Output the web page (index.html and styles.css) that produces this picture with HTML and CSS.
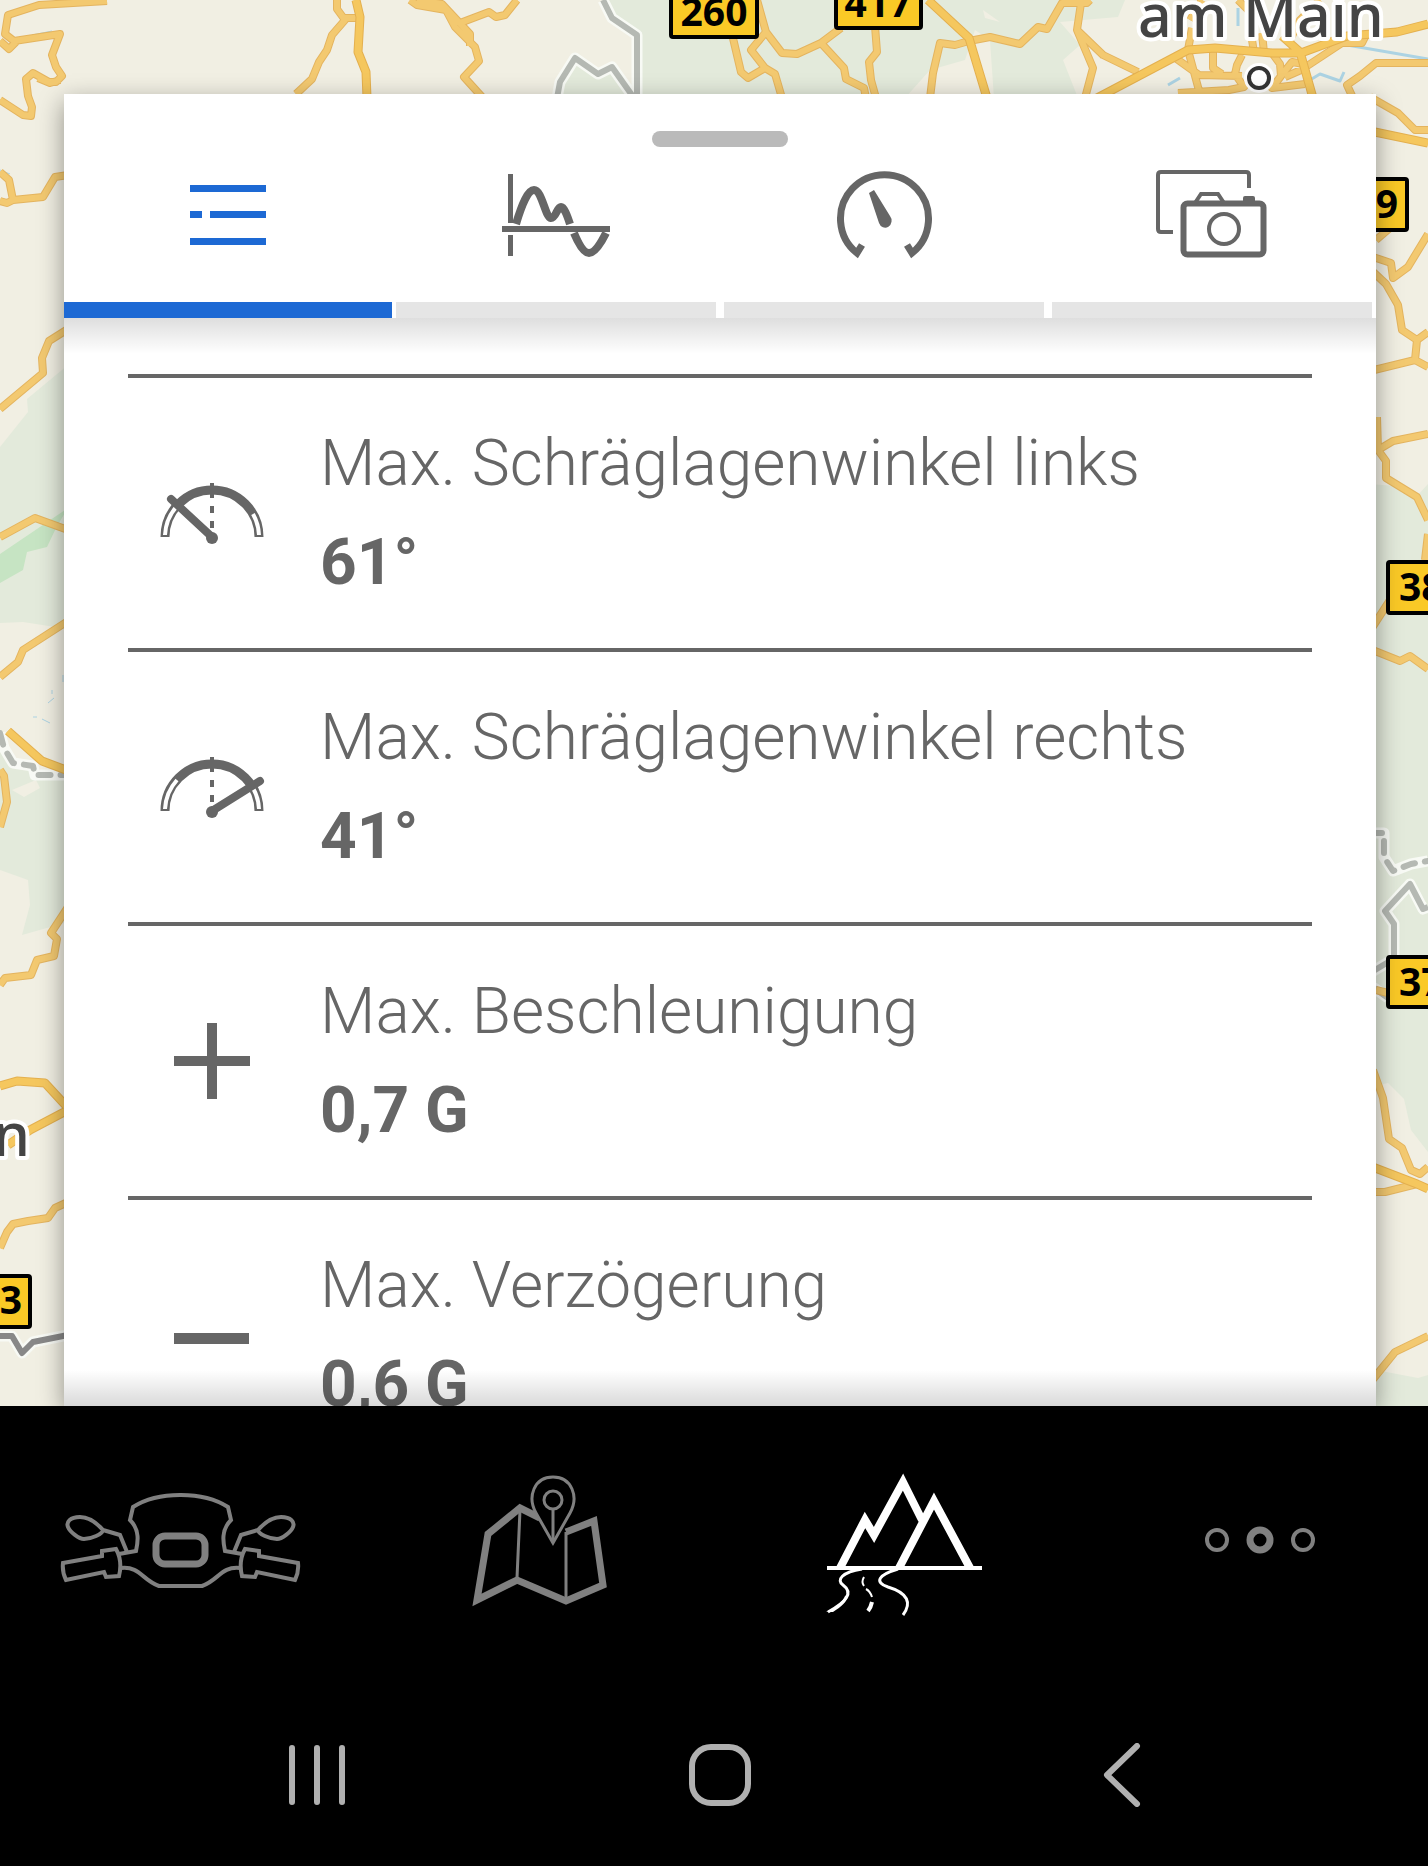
FILE: index.html
```html
<!DOCTYPE html>
<html lang="de">
<head>
  <meta charset="UTF-8" />
  <meta name="viewport" content="width=device-width, initial-scale=1.0"/>
  <title>Fahrt</title>
  <link rel="stylesheet" href="styles.css">
</head>
<body>

<main class="stage">

  <!-- Karte im Hintergrund -->
  <svg class="map" viewBox="0 0 1428 1406" preserveAspectRatio="xMinYMin slice" role="img" aria-label="Karte">
    <defs>
      <g id="roads">
        <path d="M107 1L39 5L8 15L5 34L14 41L60 34L52 55L56 67L62 76L56 82H49L33 73L26 79L28 96L32 107L31 116L23 115L0 100M0 41L9 49L16 42M38 78L50 83L60 80"/>
        <path d="M337 0V9L345 20L332 35L327 50L319 62L312 79L296 94M345 18H360"/>
        <path d="M410 0L417 5L446 10L455 27L475 47L479 61L464 77L483 98M417 0L442 4L470 34V46M460 23L489 12L496 17L505 15L517 0"/>
        <path d="M757 0L766 32L782 53L797 54L821 43L841 28M766 32L751 50L765 68L748 78L741 72L732 34M765 68L775 74L782 98M821 43L844 68L846 79L864 88L866 98M875 26L877 52L869 62L871 80L876 98"/>
        <path d="M930 98L933 73L940 43L955 45L969 41L990 37L1020 44L1038 27L1047 29L1062 3H1087L1090 0M1081 3L1077 30L1093 68L1085 98M1077 30L1103 55L1138 72"/>
        <path d="M1192 28L1188 50L1201 98M1174 57L1199 75L1242 76M1213 50V68L1222 74M1251 33L1254 53M1262 33L1264 53M1242 55L1237 65L1235 74L1244 87L1229 90L1178 93M1272 53L1280 64L1281 76L1272 88L1305 84M1281 76L1292 62L1304 64M1285 77L1301 70L1342 43H1362L1367 33M1428 63H1376L1360 76L1347 85L1353 98"/>
        <path d="M1190 20L1202 0M1238 0L1260 22M1290 40L1300 20L1320 0"/>
        <path d="M0 172L9 180L13 200L7 203L0 201M13 200L43 197L55 177L68 175M68 329L49 341L42 358L43 373L0 409M0 537L35 518L68 530M68 621L23 650L18 662L0 677M0 770L4 776L7 802L0 827"/>
        <path d="M68 907L51 933L57 939L54 956L37 960L31 975L5 978L0 985M68 1202L55 1208L48 1218L28 1221L13 1224L7 1232L0 1248"/>
        <path d="M1370 97L1398 113L1415 130H1428M1370 256L1391 263L1393 278L1408 267L1428 234M1370 269L1386 284L1398 305L1402 330L1417 340L1428 332M1417 340L1415 360L1370 371M1415 360L1428 367M1376 240L1390 228"/>
        <path d="M1377 417L1378 450L1386 461V478L1417 497L1428 520M1378 450L1393 441L1428 434M1428 534L1425 560M1370 631L1390 600M1370 649L1400 661L1410 656L1428 669M1376 990L1392 994"/>
        <path d="M1373 1070L1383 1098L1389 1139L1402 1148L1411 1170L1420 1174L1428 1167M1370 1192H1385L1417 1184M1370 1383L1395 1352L1428 1336"/>
      </g>
      <g id="main-roads">
        <path d="M356 0L360 17L358 52L366 72L367 98"/>
        <path d="M928 0L969 38L987 98"/>
        <path d="M1097 98L1188 50L1215 48L1272 53L1301 53L1347 36L1397 32L1428 24M1282 36L1300 52L1313 98"/>
        <path d="M8 731L42 761L66 770M0 1086L17 1081L45 1083L68 1108M68 1110L30 1130L8 1145"/>
        <path d="M1370 131L1428 143M1370 1166L1417 1184L1428 1189"/>
      </g>
    </defs>

    <!-- Waldflächen -->
    <g class="forest">
      <path d="M603 0L612 18L637 35V98H905L930 70L965 60L975 30L990 40L994 98H1078L1063 60L1080 45L1060 22L1118 17L1125 0Z"/>
      <path d="M557 98L560 82L575 58L598 74L612 67L634 98Z"/>
      <path d="M68 365L27 399L28 412L0 447V623L23 622L68 629Z"/>
      <path d="M0 735L15 765L68 775V922L22 935L30 905L28 880L0 870Z"/>
      <path d="M1370 484L1395 486L1418 495L1428 484V1406H1370Z"/>
    </g>
    <path class="park" d="M68 508L0 554V583L23 570L27 552L47 547L57 526Z"/>
    <g class="field">
      <path d="M1370 1087L1388 1083L1404 1099L1411 1130L1428 1152V1375L1418 1378L1381 1371L1370 1375Z"/>
      <path d="M983 10L1000 22L985 18ZM12 790L36 780L40 788L24 797Z"/>
    </g>
    <g class="water">
      <path d="M1347 45L1428 59M1168 85L1180 78M1310 80L1320 74L1340 81L1344 72M1238 8V26"/>
      <path class="stream" d="M33 717H37M42 719L50 723M48 703L54 698M52 690V694M63 675V682M27 12L40 6M32 35L52 31M0 170L10 174"/>
    </g>

    <!-- Grenzen -->
    <g class="border-halo">
      <path d="M603 0L612 18L637 35V98M557 98L560 82L575 58L598 74L612 67L634 98"/>
      <path d="M0 733L4 748L13 763L33 766L35 775H68M1370 833H1384V857L1393 871L1411 864L1428 861"/>
      <path d="M1428 907L1423 909L1410 884L1385 911L1394 924V957M1370 973L1390 961M1370 985L1388 998"/>
      <path d="M0 1336H12L22 1353L33 1342L68 1335"/>
    </g>
    <g class="border-line">
      <path d="M603 0L612 18L637 35V98M557 98L560 82L575 58L598 74L612 67L634 98"/>
      <path d="M1428 907L1423 909L1410 884L1385 911L1394 924V957M1370 973L1390 961M1370 985L1388 998"/>
      <path class="dashed" d="M0 733L4 748L13 763L33 766L35 775H68M1370 833H1384V857L1393 871L1411 864L1428 861"/>
      <path class="state" d="M0 1336H12L22 1353L33 1342L68 1335"/>
    </g>

    <use class="road-casing" href="#roads"/>
    <use class="road" href="#roads"/>
    <use class="main-casing" href="#main-roads"/>
    <use class="main-road" href="#main-roads"/>

    <!-- Straßenschilder -->
    <g class="sign">
      <rect x="671" y="-15" width="86" height="52" rx="2"/>
      <rect x="836" y="-24" width="85" height="52" rx="2"/>
      <rect x="1340" y="179" width="67" height="51" rx="2"/>
      <rect x="1388" y="562" width="86" height="51" rx="2"/>
      <rect x="1388" y="957" width="86" height="50" rx="2"/>
      <rect x="-40" y="1276" width="70" height="51" rx="2"/>
    </g>
    <g class="sign-text">
      <text x="714" y="26" text-anchor="middle">260</text>
      <text x="878" y="17" text-anchor="middle">417</text>
      <text x="1398" y="218" text-anchor="end">9</text>
      <text x="1399" y="601">38</text>
      <text x="1399" y="996">37</text>
      <text x="22" y="1314" text-anchor="end">3</text>
    </g>

    <g class="place">
      <text x="1138" y="37">am Main</text>
      <text x="30" y="1156" text-anchor="end">n</text>
    </g>
    <circle class="city-halo" cx="1259" cy="78" r="15"/>
    <circle class="city" cx="1259" cy="78" r="10"/>
  </svg>

  <section class="panel">
    <header class="panel-head">
      <div class="handle"></div>
      <div class="tabs" role="tablist">
        <button class="tab active" role="tab" aria-selected="true" aria-label="Liste">
          <svg width="76" height="60" viewBox="0 0 76 60" fill="currentColor">
            <path d="M0 0H76V7H0ZM0 26H12V33H0ZM20 26H76V33H20ZM0 53H76V60H0Z"/>
          </svg>
        </button>
        <button class="tab" role="tab" aria-selected="false" aria-label="Diagramm">
          <svg width="108" height="84" viewBox="0 0 108 84" fill="none" stroke="currentColor">
            <path stroke-width="5" d="M8.5 1V50M8.5 62V83"/>
            <path stroke-width="6" d="M0 56H108"/>
            <path stroke-width="8" d="M14 51C20 31 26 17 32 17C40 17 43 44 49 45C54 45 55 34 59 34C62 34 65 42 68 51M72 60C77 72 82 80 87 80C92 80 98 72 104 60"/>
          </svg>
        </button>
        <button class="tab" role="tab" aria-selected="false" aria-label="Tacho">
          <svg width="97" height="90" viewBox="0 0 97 90" fill="none" stroke="currentColor">
            <path stroke-width="7" d="M26 75L21 83A44 44 0 1 1 76 83L71 75"/>
            <path fill="currentColor" stroke="none" d="M33 23L38 20L54 46A6.5 7 0 1 1 43 53Z"/>
          </svg>
        </button>
        <button class="tab" role="tab" aria-selected="false" aria-label="Bilder">
          <svg width="114" height="92" viewBox="0 0 114 92" fill="none" stroke="currentColor">
            <path stroke-width="4" d="M94 19V6Q94 3 91 3H6Q3 3 3 6V60Q3 63 6 63H18"/>
            <rect stroke-width="6" x="28.5" y="34.5" width="80" height="51" rx="4"/>
            <circle stroke-width="4" cx="69" cy="60" r="15"/>
            <path stroke-width="4" d="M40 34L46 25H63L69 34"/>
            <path fill="currentColor" stroke="none" d="M88 33V29Q88 27 90 27H98Q100 27 100 29V33Z"/>
          </svg>
        </button>
      </div>
    </header>

    <div class="panel-body">
      <ul class="stats">
        <li class="stat">
          <svg class="stat-icon" width="108" height="66" viewBox="0 0 108 66" fill="none" stroke="currentColor">
            <path stroke-width="9" d="M7 57A47 47 0 0 1 101 57"/>
            <path stroke="#fff" stroke-width="4" d="M7 55A47 47 0 0 1 21 24M101 55A47 47 0 0 0 95 34"/>
            <path stroke-width="4" d="M54 3V18M54 26V33M54 41V48"/>
            <path stroke-width="8" stroke-linecap="round" d="M54 57L13 19"/>
            <circle cx="54" cy="58" r="6" fill="currentColor" stroke="none"/>
          </svg>
          <div>
            <p class="label">Max. Schräglagenwinkel links</p>
            <p class="value">61°</p>
          </div>
        </li>
        <li class="stat">
          <svg class="stat-icon" width="108" height="66" viewBox="0 0 108 66" fill="none" stroke="currentColor">
            <path stroke-width="9" d="M7 57A47 47 0 0 1 101 57"/>
            <path stroke="#fff" stroke-width="4" d="M7 55A47 47 0 0 1 19 26M101 55A47 47 0 0 0 95 34"/>
            <path stroke-width="4" d="M54 3V18M54 26V33M54 41V48"/>
            <path stroke-width="8" stroke-linecap="round" d="M54 57L102 27"/>
            <circle cx="54" cy="58" r="6" fill="currentColor" stroke="none"/>
          </svg>
          <div>
            <p class="label">Max. Schräglagenwinkel rechts</p>
            <p class="value">41°</p>
          </div>
        </li>
        <li class="stat">
          <svg class="stat-icon" width="76" height="76" viewBox="0 0 76 76" fill="currentColor">
            <path d="M33 0H43V33H76V43H43V76H33V43H0V33H33Z"/>
          </svg>
          <div>
            <p class="label">Max. Beschleunigung</p>
            <p class="value">0,7 G</p>
          </div>
        </li>
        <li class="stat">
          <svg class="stat-icon" width="76" height="76" viewBox="0 0 76 76" fill="currentColor">
            <path d="M0 36H75V47H0Z"/>
          </svg>
          <div>
            <p class="label">Max. Verzögerung</p>
            <p class="value">0,6 G</p>
          </div>
        </li>
      </ul>
    </div>
  </section>
</main>

<footer class="bottom">
  <!-- App-Navigation -->
  <nav class="app-nav">
    <a href="#" aria-label="Motorrad">
      <svg width="241" height="100" viewBox="0 0 241 100" fill="none" stroke="currentColor" stroke-width="4">
        <defs>
          <g id="bar-half">
            <path d="M122 5H120C100 5 84 10 73 17L70 30C80 40 78 52 76 61L59 64"/>
            <path d="M43 40C35 31 27 27 20 27C10 27 6 32 8 37C10 42 19 49 24 49C31 49 43 44 43 40ZM43 40L60 45L67 62"/>
            <path d="M3 73L42 66V61L56 59C61 68 61 78 59 86L46 87L44 82L6 90Q2 82 3 73Z"/>
            <path d="M61 78C80 76 82 90 99 96H122"/>
          </g>
        </defs>
        <use href="#bar-half"/>
        <use href="#bar-half" transform="translate(241 0) scale(-1 1)"/>
        <rect x="96" y="46" width="49" height="28" rx="9" stroke-width="7"/>
      </svg>
    </a>
    <a href="#" aria-label="Karte">
      <svg width="140" height="140" viewBox="0 0 140 140" fill="none" stroke="currentColor">
        <path stroke-width="7" d="M70 48L50 38L18 64L7 130L47 110L96 131L133 115L124 51L96 62"/>
        <path stroke-width="3" d="M50 40L47 108M96 62V130"/>
        <path fill="#000" stroke-width="3" d="M83 73L66 43C57 27 64 7 83 7C102 7 109 27 100 43Z"/>
        <circle stroke-width="3" cx="83" cy="30" r="9"/>
        <path stroke-width="3" d="M83 39V70"/>
      </svg>
    </a>
    <a href="#" class="current" aria-label="Fahrten">
      <svg width="166" height="152" viewBox="-3 -6 166 152" fill="none" stroke="currentColor">
        <path stroke-width="8" d="M20 98L45 50L54 65L83 12L102 50"/>
        <path stroke-width="8" d="M79 98L114 31L150 98"/>
        <path stroke-width="4" d="M7 98H162"/>
        <path stroke-width="3" d="M42 99C22 102 16 110 23 115C34 123 26 132 8 142M78 99C58 105 54 112 68 117C88 123 92 133 83 145"/>
        <path fill="currentColor" stroke="none" d="M25 126C23 132 15 138 6 142H13C21 137 27 132 28 125Z"/>
        <path stroke-width="2" d="M44 107Q41 112 44 116M46 119Q50 121 52 127"/>
        <path stroke-width="4" d="M52 132Q51 137 48 141"/>
      </svg>
    </a>
    <a href="#" aria-label="Mehr">
      <svg width="112" height="28" viewBox="0 0 112 28" fill="none" stroke="currentColor">
        <circle cx="13" cy="14" r="10" stroke-width="4"/>
        <circle cx="56" cy="14" r="10" stroke-width="7"/>
        <circle cx="99" cy="14" r="10" stroke-width="4"/>
      </svg>
    </a>
  </nav>

  <!-- System-Navigation -->
  <div class="system-nav">
    <button aria-label="Letzte Apps">
      <svg width="64" height="64" viewBox="0 0 64 64" fill="none" stroke="currentColor" stroke-width="6" stroke-linecap="round">
        <path d="M7 5V59M32 5V59M57 5V59"/>
      </svg>
    </button>
    <button aria-label="Startseite">
      <svg width="64" height="64" viewBox="0 0 64 64" fill="none" stroke="currentColor" stroke-width="6">
        <rect x="4" y="4" width="56" height="56" rx="19"/>
      </svg>
    </button>
    <button aria-label="Zurück">
      <svg width="64" height="64" viewBox="0 0 64 64" fill="none" stroke="currentColor" stroke-width="6" stroke-linecap="round" stroke-linejoin="round">
        <path d="M46 3L16 32L46 61"/>
      </svg>
    </button>
  </div>
</footer>

</body>
</html>
```
FILE: styles.css
```css
* { margin: 0; padding: 0; box-sizing: border-box; }

body {
  display: flex;
  flex-direction: column;
  height: 100vh;
  overflow: hidden;
  background-color: black;
  color: #666;
  font-family: Roboto, "Noto Sans", sans-serif;
}

svg {
  display: block;
}

button {
  border: none;
  background: none;
  color: inherit;
  cursor: pointer;
}

/* Karte */
.stage {
  position: relative;
  flex: 1;
  min-height: 0;
  display: flex;
  padding: 94px 52px 0 64px;
  overflow: hidden;
  background: #f1efe3;
}

.map {
  position: absolute;
  top: 0;
  left: 0;
  width: 100%;
  height: 100%;
  fill: none;
  stroke-linejoin: round;
}

.forest { fill: #e3eadb; }
.park { fill: #c6e4c3; }
.field { fill: #f1efe3; }
.water { stroke: #acd3e3; stroke-width: 3; }
.stream { stroke-width: 1; }

.border-halo { stroke: #f8faf5; stroke-width: 11; }
.border-line { stroke: #b5b9b3; stroke-width: 6; }
.dashed { stroke-dasharray: 12 10; stroke-linecap: round; }
.state { stroke: #888; }

.road-casing { stroke: #e4b45f; stroke-width: 8; }
.road { stroke: #f3c970; stroke-width: 6; }
.main-casing { stroke: #e4b04f; stroke-width: 9; }
.main-road { stroke: #f5c75e; stroke-width: 7; }

.sign {
  fill: #fac926;
  stroke: black;
  stroke-width: 4;
}

.sign-text {
  fill: black;
  font: bold 39px "Noto Sans", sans-serif;
}

.place {
  fill: #444;
  stroke: white;
  stroke-width: 8;
  paint-order: stroke;
  font: 500 59px "Noto Sans", sans-serif;
}

.city-halo { fill: white; }
.city { fill: white; stroke: #333; stroke-width: 4; }

/* Panel */
.panel {
  position: relative;
  flex: 1;
  display: flex;
  flex-direction: column;
  background: white;
  box-shadow: 0 8px 24px rgba(0, 0, 0, 0.4);
}

.panel-head {
  display: flex;
  flex-direction: column;
  align-items: center;
  height: 224px;
  padding-top: 37px;
}

.handle {
  width: 136px;
  height: 16px;
  border-radius: 8px;
  background: #bababa;
}

.tabs {
  flex: 1;
  align-self: stretch;
  display: grid;
  grid-template-columns: repeat(4, 1fr);
}

.tab {
  display: flex;
  flex-direction: column;
  align-items: center;
}

.tab svg {
  margin: auto;
}

/* Balken unter dem Tab */
.tab::after {
  content: "";
  align-self: stretch;
  height: 16px;
  margin: 20px 4px 0;
  background: #e5e5e5;
}

.tab.active {
  color: #1d69d4;
}

.tab.active::after {
  margin: 20px 0 0;
  background: #1d69d4;
}

.panel-body {
  position: relative;
  flex: 1;
  min-height: 0;
  overflow: hidden;
}

.panel-body::before,
.panel-body::after {
  content: "";
  position: absolute;
  left: 0;
  right: 0;
  height: 36px;
}

.panel-body::before {
  top: 0;
  background: linear-gradient(rgba(0, 0, 0, 0.13), transparent);
}

.panel-body::after {
  bottom: 0;
  background: linear-gradient(transparent, rgba(0, 0, 0, 0.15));
}

.stats {
  padding: 56px 64px 0;
  list-style: none;
}

.stat {
  display: grid;
  grid-template-columns: 168px 1fr;
  gap: 24px;
  align-items: center;
  padding: 48px 0;
  border-top: 4px solid #666;
}

.stat-icon {
  justify-self: center;
}

.label,
.value {
  font-size: 64px;
  line-height: 75px;
  white-space: nowrap;
}

.label {
  margin-bottom: 24px;
  font-weight: 300;
}

.value {
  font-weight: bold;
}

/* Untere Leisten */
.app-nav {
  display: grid;
  grid-template-columns: repeat(4, 1fr);
  height: 268px;
  margin-right: -12px;
}

.app-nav a {
  display: flex;
  align-items: center;
  justify-content: center;
  color: #808080;
}

.app-nav .current {
  color: white;
}

.system-nav {
  display: grid;
  grid-template-columns: repeat(3, 1fr);
  height: 192px;
  padding: 10px 104px 0 116px;
  color: #b0b0b0;
}

.system-nav button {
  display: flex;
  align-items: center;
  justify-content: center;
}
```
